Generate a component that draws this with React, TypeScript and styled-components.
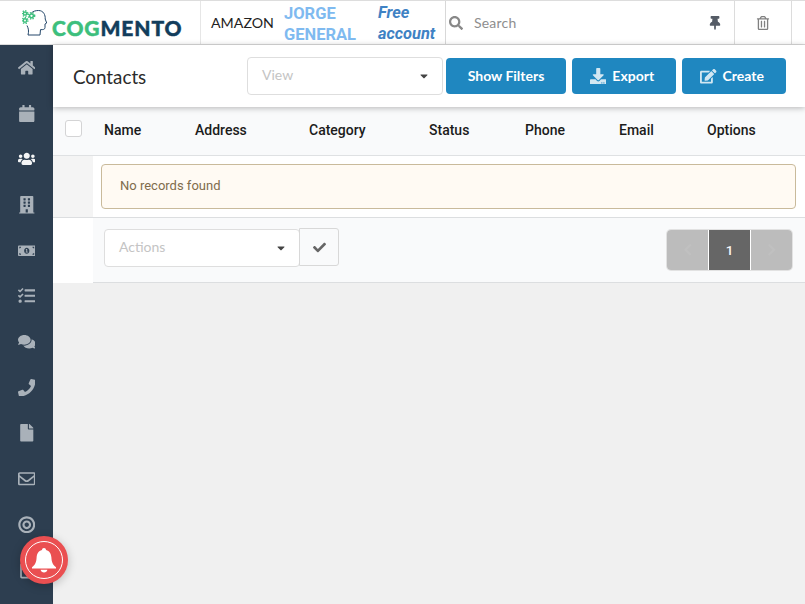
import React from "react";
import styled, { createGlobalStyle } from "styled-components";
import {
  FaHome, FaCalendar, FaUsers, FaBuilding, FaMoneyBillAlt, FaTasks, FaComments, FaPhone, FaFile,
  FaRegEnvelope, FaBullseye, FaRegClipboard, FaThumbtack, FaRegTrashAlt, FaSearch, FaDownload, FaEdit, FaCheck,
  FaChevronLeft, FaChevronRight, FaCaretDown,
} from "react-icons/fa";

const Global = createGlobalStyle`
  html, body { margin: 0; padding: 0; background: #f0f0f0; }
  * { box-sizing: border-box; }
  #root { width: 805px; height: 604px; overflow: hidden; }
`;

const Page = styled.div`
  width: 805px; height: 604px; position: relative; display: flex; flex-direction: column;
  background: #f0f0f0; font-family: Lato, sans-serif; overflow: hidden;
`;
const TopBar = styled.header`
  height: 45px; flex: none; display: flex; background: #fff;
  border-top: 1px solid #ddd; border-bottom: 1px solid #dcdcdc;
`;
const LogoCell = styled.div`
  width: 201px; flex: none; display: flex; align-items: center; padding: 0 0 0 22px; border-right: 1px solid #e6e6e6;
`;
const LogoText = styled.span`
  font-family: Lato, sans-serif; font-weight: 900; font-size: 21px; letter-spacing: 0.9px; color: #123d5c; margin: 10px 0 0 5px;
  -webkit-text-stroke: 0.45px currentColor;
`;
const Cog = styled.span`color: #3dbf7d;`;
const Account = styled.div`
  width: 245px; flex: none; display: flex; align-items: center; padding-left: 10px; border-right: 1px solid #d8d8d8;
`;
const Company = styled.span`font-size: 14.2px; color: #222; width: 73px; flex: none;`;
const UserName = styled.span`
  font-family: Roboto, sans-serif; font-weight: 700; font-size: 16.5px; line-height: 21px; color: #7fbaf0; width: 94px; flex: none; margin-top: 2px;
`;
const Plan = styled.span`
  font-family: Roboto, sans-serif; font-weight: 700; font-style: italic; font-size: 16.4px; line-height: 21px; color: #3f82c4; margin-top: 1px;
`;
const SearchCell = styled.div`
  flex: 1; display: flex; align-items: center; padding-left: 3px; color: #888; position: relative;
`;
const SearchLabel = styled.span`font-size: 14px; color: #8e8e8e; margin-left: 11px; flex: 1; letter-spacing: 0.2px;`;
const PinBox = styled.div`
  width: 29px; flex: none; color: #555c66; display: flex; align-items: center; padding-left: 3px; align-self: stretch;
  font-size: 14px;
`;
const IconCell = styled.div<{ $w: number }>`
  width: ${(p) => p.$w}px; flex: none; display: flex; align-items: center; justify-content: center; align-self: stretch;
  border-left: 1px solid #dcdcdc; color: #808080; font-size: 14px;
`;
const Body = styled.div`flex: 1; display: flex; min-height: 0;`;
const Sidebar = styled.nav`
  width: 53px; flex: none; background: #2d3e50; overflow: hidden; display: flex; flex-direction: column;
`;
const NavItem = styled.div<{ $active?: boolean }>`
  height: 45.67px; flex: none; display: flex; align-items: center; justify-content: center;
  font-size: 17.5px; color: ${(p) => (p.$active ? "#f4f5f6" : "#a9b1b9")};
`;
const Main = styled.main`flex: 1; display: flex; flex-direction: column; min-width: 0;`;
const Header = styled.div`
  height: 62px; flex: none; background: #fff; display: flex; align-items: center; padding: 0 19px 0 20px;
  box-shadow: 0 1px 6px rgba(0,0,0,.28); position: relative; z-index: 1;
`;
const Title = styled.h1`
  margin: 0; font-weight: 400; font-size: 18.8px; color: #2b2b2b; width: 174px; flex: none;
`;
const Select = styled.div<{ $w: number }>`
  width: ${(p) => p.$w}px; height: 38px; flex: none; display: flex; align-items: center; justify-content: space-between;
  background: #fff; border: 1px solid #dedede; border-radius: 4px; padding: 0 14px 4px; font-size: 14px; color: #c4c4c4;
`;
const Caret = styled.span`color: #444; font-size: 12px; display: flex; margin: 4px 0 0; position: relative; left: 2px;`;
const Buttons = styled.div`display: flex; gap: 6px; margin-left: 3px;`;
const Btn = styled.div<{ $w: number; $icon?: boolean }>`
  width: ${(p) => p.$w}px; height: 36px; display: flex; align-items: center; justify-content: center; gap: 6px;
  background: #1f87c0; border-radius: 4px; color: #fff; font-weight: 700; font-size: 14px;
  padding: 0 ${(p) => (p.$icon ? 4 : 0)}px 2px 0;
  svg { opacity: .8; font-size: 16.5px; margin-top: 2px; }
`;
const HeadRow = styled.div`
  height: 49px; flex: none; background: #f9fafb; border-bottom: 1px solid #dfe1e3; display: flex; align-items: center;
  font-family: Roboto, sans-serif; font-weight: 500; font-size: 14px; color: #1c1c1c; padding-bottom: 2px;
`;
const CheckBox = styled.span`
  width: 17px; height: 17px; border: 1px solid #d4d4d5; border-radius: 3px; background: #fff; margin: -3px 0 0 12px; flex: none;
`;
const Col = styled.span<{ $w: number }>`width: ${(p) => p.$w}px; flex: none;`;
const EmptyRow = styled.div`
  height: 62px; flex: none; display: flex; background: #fff; border-bottom: 1px solid #dcdee0;
`;
const Gutter = styled.div<{ $c: string }>`width: 40px; flex: none; background: ${(p) => p.$c};`;
const Notice = styled.div`
  margin: 8px 9px 8px 8px; flex: 1; background: #fffaf3; border: 1px solid #c9ba9b; border-radius: 4px;
  display: flex; align-items: center; padding: 0 0 2px 18px;
  font-family: Roboto, sans-serif; font-size: 13px; color: #806c4c;
`;
const FootRow = styled.div`display: flex; height: 65px; flex: none;`;
const FootBar = styled.div`
  flex: 1; background: #f9fafb; border-bottom: 1px solid #dcdee0; display: flex; align-items: flex-start; padding: 10px 13px 0 11px;
`;
const ActionGroup = styled.div`display: flex; align-items: flex-start; padding-top: 1px;`;
const Apply = styled.div`
  width: 40px; height: 38px; margin: -1px 0 0 -1px; background: #f9fafb; border: 1px solid #d8d8d8; border-radius: 0 3px 3px 0;
  display: flex; align-items: center; justify-content: center; color: #666; font-size: 13px; flex: none;
`;
const Pager = styled.div`
  margin: 2px 0 0 auto; display: flex; height: 40px; border-radius: 4px; overflow: hidden;
  box-shadow: 0 0 0 1px #e2e2e2; gap: 1px; background: #fff;
`;
const PageCell = styled.div<{ $active?: boolean }>`
  width: 41px; display: flex; align-items: center; justify-content: center;
  background: ${(p) => (p.$active ? "#666" : "#bcbcbc")}; color: ${(p) => (p.$active ? "#f5f5f5" : "#c0c0c0")};
  font-family: Roboto, sans-serif; font-weight: 500; font-size: 13.5px;
`;
const Bell = styled.div`
  position: absolute; left: 20px; top: 536px; width: 48px; height: 48px; border-radius: 50%; background: #ea4f51;
  display: flex; align-items: center; justify-content: center; box-shadow: 0 2px 10px rgba(0,0,0,.22); z-index: 3;
`;
const BellRing = styled.div`
  width: 38px; height: 38px; border-radius: 50%; border: 1.5px solid #fff; display: flex; align-items: center; justify-content: center;
`;

function LogoMark() {
  return (
    <svg width="25" height="26" viewBox="0 0 25 26" fill="none" style={{ flex: "none", marginTop: 0 }}>
      <path d="M9 3.5 C11 1 14 .5 16.5 .5 C21.5 .5 23.5 5 23.2 9 L24.7 13 L23 14 L23 17.5 C23 19.5 21 19.8 18.5 19.6 L18 25 L6 25 C7 21 6.5 18.5 5 15.5" stroke="#24476a" strokeWidth="1" />
      <g fill="none" stroke="#3dbf7d" strokeWidth="1.5">
        <circle cx="3" cy="3.5" r="1.6" />
        <circle cx="9.5" cy="5.8" r="1.9" />
        <circle cx="3" cy="10.5" r="1.7" />
      </g>
      <g stroke="#3dbf7d" strokeWidth="1.4" strokeDasharray="1.3 1.3">
        <circle cx="3" cy="3.5" r="2.8" />
        <circle cx="9.5" cy="5.8" r="3.2" />
        <circle cx="3" cy="10.5" r="2.9" />
      </g>
    </svg>
  );
}

function BellGlyph() {
  return (
    <svg width="26" height="25" viewBox="0 0 26 25" fill="#fff">
      <path d="M13 0 C14.2 0 15 .8 15 1.9 C18.6 2.8 20.2 5.8 20.4 9.5 C20.6 14 21.6 16.6 25 19.2 L25 20.4 L1 20.4 L1 19.2 C4.4 16.6 5.4 14 5.6 9.5 C5.8 5.8 7.4 2.8 11 1.9 C11 .8 11.8 0 13 0 Z" />
      <path d="M9.6 21.8 L16.4 21.8 C16 23.6 14.7 24.6 13 24.6 C11.3 24.6 10 23.6 9.6 21.8 Z" />
    </svg>
  );
}

const nav = [FaHome, FaCalendar, FaUsers, FaBuilding, FaMoneyBillAlt, FaTasks, FaComments, FaPhone, FaFile, FaRegEnvelope, FaBullseye, FaRegClipboard];
const cols: [string, number][] = [["Name", 91], ["Address", 114], ["Category", 120], ["Status", 96], ["Phone", 94], ["Email", 88], ["Options", 60]];

export default function App() {
  return (
    <Page>
      <Global />
      <TopBar>
        <LogoCell>
          <LogoMark />
          <LogoText><Cog>COG</Cog>MENTO</LogoText>
        </LogoCell>
        <Account>
          <Company>AMAZON</Company>
          <UserName>JORGE GENERAL</UserName>
          <Plan>Free account</Plan>
        </Account>
        <SearchCell>
          <FaSearch size={14} />
          <SearchLabel>Search</SearchLabel>
          <PinBox><FaThumbtack /></PinBox>
          <IconCell $w={57}><FaRegTrashAlt /></IconCell>
          <IconCell $w={14} />
        </SearchCell>
      </TopBar>
      <Body>
        <Sidebar>
          {nav.map((Icon, i) => (
            <NavItem key={i} $active={i === 2}><Icon /></NavItem>
          ))}
        </Sidebar>
        <Main>
          <Header>
            <Title>Contacts</Title>
            <Select $w={196}>View<Caret><FaCaretDown /></Caret></Select>
            <Buttons>
              <Btn $w={120}>Show Filters</Btn>
              <Btn $w={104} $icon><FaDownload />Export</Btn>
              <Btn $w={104} $icon><FaEdit />Create</Btn>
            </Buttons>
          </Header>
          <HeadRow>
            <CheckBox />
            <Col $w={22} />
            {cols.map(([c, w]) => <Col key={c} $w={w}>{c}</Col>)}
          </HeadRow>
          <EmptyRow>
            <Gutter $c="#f4f4f4" />
            <Notice>No records found</Notice>
          </EmptyRow>
          <FootRow>
            <Gutter $c="#fff" />
            <FootBar>
              <ActionGroup>
                <Select $w={196}>Actions<Caret><FaCaretDown /></Caret></Select>
                <Apply><FaCheck /></Apply>
              </ActionGroup>
              <Pager>
                <PageCell><FaChevronLeft /></PageCell>
                <PageCell $active>1</PageCell>
                <PageCell><FaChevronRight /></PageCell>
              </Pager>
            </FootBar>
          </FootRow>
        </Main>
      </Body>
      <Bell><BellRing><BellGlyph /></BellRing></Bell>
    </Page>
  );
}
